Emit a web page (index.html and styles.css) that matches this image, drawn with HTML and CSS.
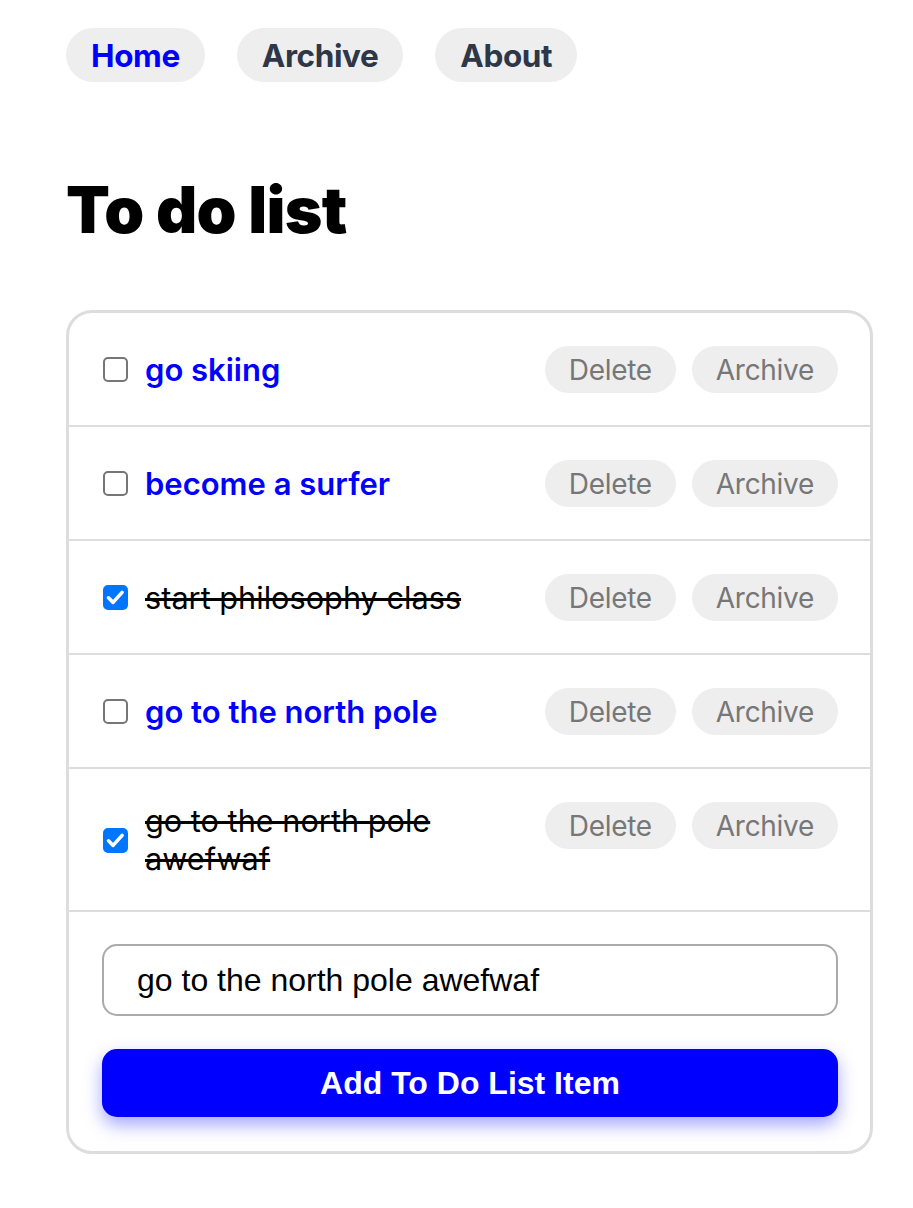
FILE: index.html
```html
<!DOCTYPE html>
<html lang="en">
<head>
<meta charset="utf-8">
<title>To do list</title>
<link rel="stylesheet" href="styles.css">
</head>
<body>
<div class="page">
  <nav class="nav">
    <a class="pill active" href="#">Home</a>
    <a class="pill" href="#">Archive</a>
    <a class="pill" href="#">About</a>
  </nav>
  <h1 class="title">To do list</h1>
  <div class="card">
    <ul class="list">
      <li class="row">
        <label class="item">
          <span class="box"><input type="checkbox"></span>
          <span class="text">go skiing</span>
        </label>
        <div class="actions"><button class="act">Delete</button><button class="act">Archive</button></div>
      </li>
      <li class="row">
        <label class="item">
          <span class="box"><input type="checkbox"></span>
          <span class="text">become a surfer</span>
        </label>
        <div class="actions"><button class="act">Delete</button><button class="act">Archive</button></div>
      </li>
      <li class="row">
        <label class="item">
          <span class="box"><input type="checkbox" checked><svg class="tick" viewBox="0 0 25 25"><path d="M5.5 12.8l4.6 4.6 9-10" fill="none" stroke="#fff" stroke-width="3.6" stroke-linecap="round" stroke-linejoin="round"/></svg></span>
          <span class="text done">start philosophy class</span>
        </label>
        <div class="actions"><button class="act">Delete</button><button class="act">Archive</button></div>
      </li>
      <li class="row">
        <label class="item">
          <span class="box"><input type="checkbox"></span>
          <span class="text">go to the north pole</span>
        </label>
        <div class="actions"><button class="act">Delete</button><button class="act">Archive</button></div>
      </li>
      <li class="row">
        <label class="item">
          <span class="box"><input type="checkbox" checked><svg class="tick" viewBox="0 0 25 25"><path d="M5.5 12.8l4.6 4.6 9-10" fill="none" stroke="#fff" stroke-width="3.6" stroke-linecap="round" stroke-linejoin="round"/></svg></span>
          <span class="text done">go to the north pole awefwaf</span>
        </label>
        <div class="actions"><button class="act">Delete</button><button class="act">Archive</button></div>
      </li>
    </ul>
    <form class="add">
      <input class="field" type="text" value="go to the north pole awefwaf">
      <button class="submit" type="button">Add To Do List Item</button>
    </form>
  </div>
</div>
</body>
</html>
```

FILE: styles.css
```css
* { box-sizing: border-box; }
html, body { margin: 0; padding: 0; background: #fff; }
body { font-family: Inter, "Noto Sans", sans-serif; color: #000; }

.page { width: 807px; margin-left: 66px; padding-top: 28px; padding-bottom: 40px; }

.nav { display: flex; gap: 32px; }
.pill {
  display: flex; align-items: center; height: 54px; padding: 0 25px;
  border-radius: 27px; background: #eeeeee; color: #2d3748;
  font-size: 31.5px; font-weight: 700; text-decoration: none; letter-spacing: -0.4px;
}
.pill.active { color: #0000ff; }

.title { margin: 90px 0 0 0; font-size: 64px; font-weight: 900; line-height: 76px; letter-spacing: -0.6px; }

.card { margin-top: 62px; border: 3px solid #dddddd; border-radius: 26px; overflow: hidden; }

.list { list-style: none; margin: 0; padding: 0; }
.row {
  display: flex; align-items: flex-start; justify-content: space-between; gap: 16px;
  padding: 33px 32px 32px 34px; border-bottom: 2px solid #dddddd;
}
.item { display: flex; align-items: center; gap: 17px; min-height: 47px; flex: 1; min-width: 0; }
.box { position: relative; width: 25px; height: 25px; flex: none; }
.box input {
  appearance: none; -webkit-appearance: none; margin: 0; width: 25px; height: 25px;
  border: 2px solid #767676; border-radius: 5px; background: #fff; display: block;
}
.box input:checked { background: #0075ff; border-color: #0075ff; }
.tick { position: absolute; left: 0; top: 0; width: 25px; height: 25px; pointer-events: none; }
.text { font-size: 31px; line-height: 38px; font-weight: 600; color: #0000ff; max-width: 390px; }
.text.done { color: #000; font-size: 30.7px; font-weight: 400; text-decoration: line-through; text-decoration-thickness: 3px; }

.actions { display: flex; gap: 16px; flex: none; }
.act {
  height: 47px; padding: 0 24px; border: none; border-radius: 24px; background: #eeeeee;
  color: #777777; font-family: Inter, "Noto Sans", sans-serif; font-size: 28px; font-weight: 400;
  letter-spacing: -0.3px;
}

.add { display: flex; flex-direction: column; gap: 33px; padding: 32px 32px 34px 33px; }
.field {
  width: 100%; height: 72px; padding: 0 33px; border: 2px solid #aaaaaa; border-radius: 15px;
  font-family: "Liberation Sans", Arial, sans-serif; font-size: 32px; color: #000; outline: none;
}
.submit {
  width: 100%; height: 68px; border: none; border-radius: 15px; background: #0000ff; color: #fff;
  font-family: "Liberation Sans", Arial, sans-serif; font-size: 32px; font-weight: 700;
  box-shadow: 0 8px 18px rgba(0, 0, 255, 0.35);
}
```
